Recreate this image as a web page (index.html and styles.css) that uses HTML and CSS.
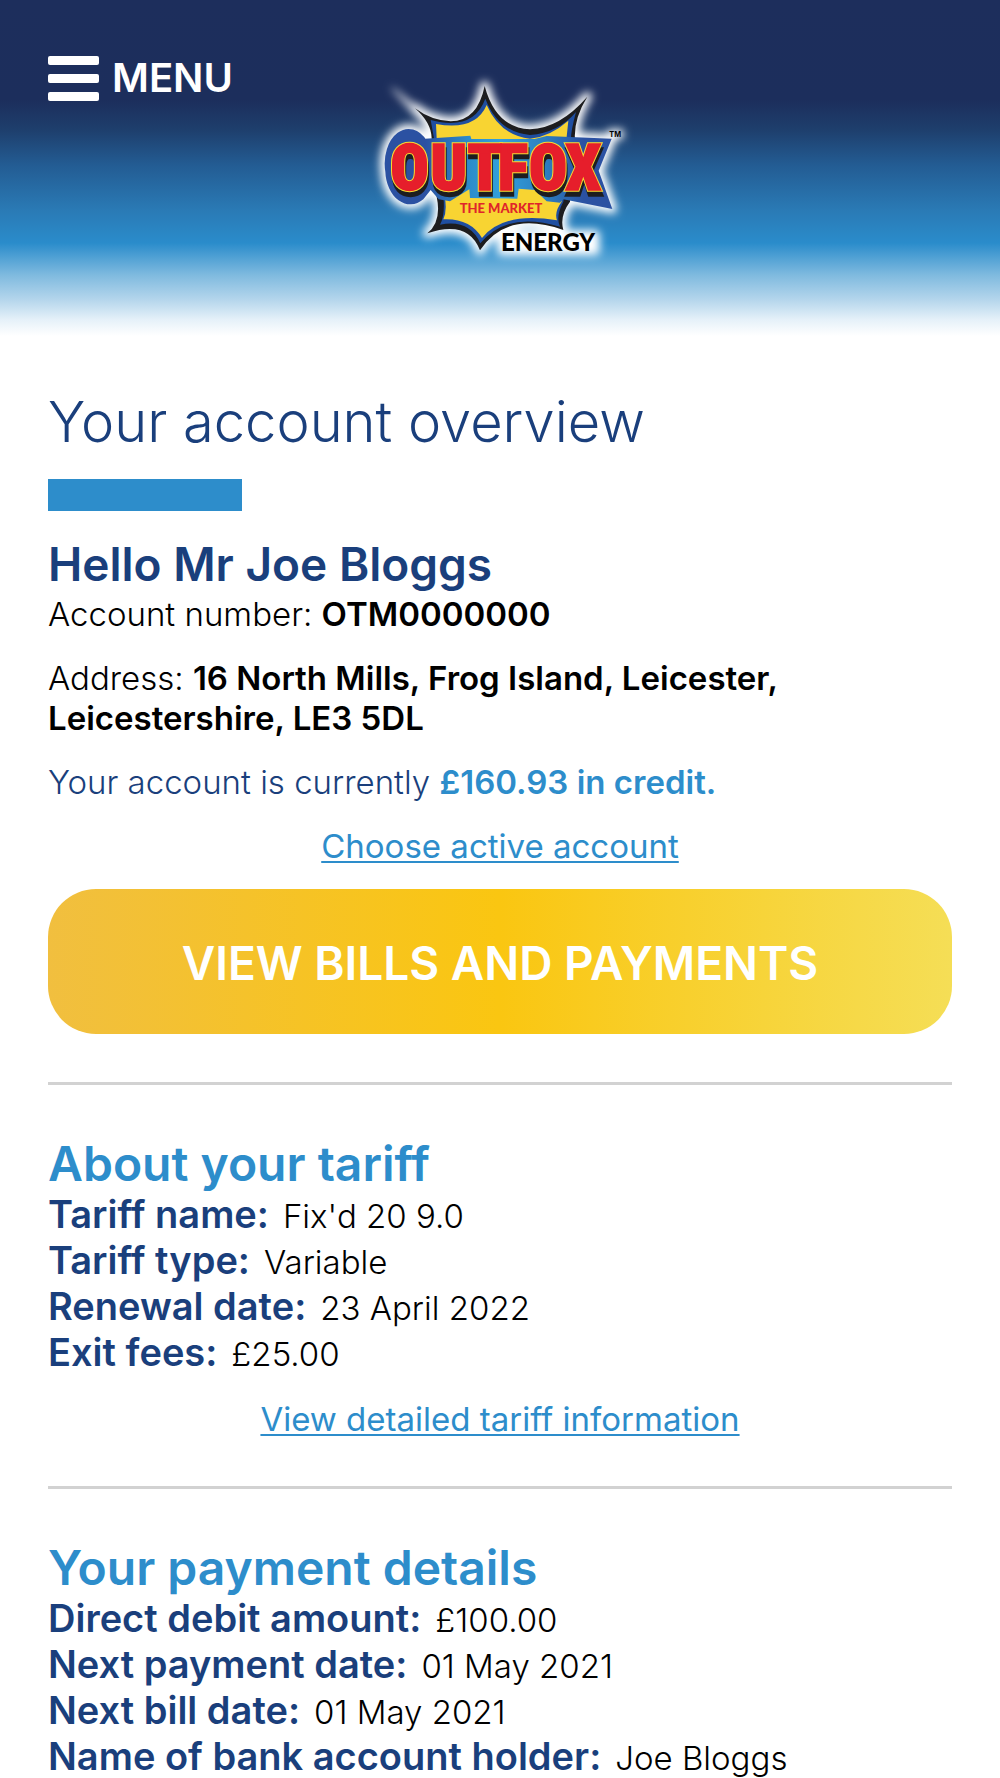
FILE: index.html
```html
<!DOCTYPE html>
<html lang="en">
<head>
  <meta charset="utf-8">
  <meta name="viewport" content="width=device-width, initial-scale=1">
  <title>Your account overview</title>
  <link rel="stylesheet" href="styles.css">
</head>
<body>
  <header class="header">
    <button class="menu" type="button">
      <svg class="menu-icon" viewBox="0 0 51 45" aria-hidden="true">
        <rect width="51" height="9" rx="2"/>
        <rect y="18" width="51" height="9" rx="2"/>
        <rect y="36" width="51" height="9" rx="2"/>
      </svg>
      MENU
    </button>
    <svg class="logo" viewBox="0 0 840 630" role="img" aria-label="Outfox the Market Energy">
      <defs>
        <filter id="glow" x="-20%" y="-20%" width="140%" height="140%">
          <feGaussianBlur stdDeviation="12"/>
        </filter>
        <linearGradient id="panel" gradientUnits="userSpaceOnUse" x1="90" y1="0" x2="750" y2="0">
          <stop offset="0" stop-color="#2b51a2"/>
          <stop offset=".16" stop-color="#2b51a2"/>
          <stop offset=".36" stop-color="#2c8ccb"/>
          <stop offset=".5" stop-color="#32a0dc"/>
          <stop offset=".7" stop-color="#2c80c0"/>
          <stop offset=".88" stop-color="#2b51a2"/>
        </linearGradient>
        <path id="burst" d="M165 145Q215 182 272 184Q352 184 374 78Q408 204 510 208Q600 204 682 110Q640 178 645 240L630 425Q598 468 610 510Q440 450 360 571Q324 478 202 520Q246 484 230 410L215 235Q214 188 165 145Z"/>
        <path id="plate" d="M195 236L331 227L334 237L524 237L560 228L755 236L716 332L757 447L610 418L600 428L560 424L524 390L476 386L472 416L330 414L328 388L270 424L236 418L212 390L190 418A75 102 0 0 1 76 335A72 104 0 0 1 200 242Z"/>
        <text id="word" y="389" x="91 211 322 413 506 616">OUTFOX</text>
      </defs>
      <g class="glow" filter="url(#glow)">
        <use href="#burst"/>
        <use href="#plate"/>
        <path class="flare" d="M96 84L172 145L205 205Z"/>
        <path d="M425 524H705V572H425Z"/>
        <path class="flare" d="M745 210H788V236H745Z"/>
      </g>
      <use class="burst-edge" href="#burst"/>
      <path class="burst-blue" d="M212 180Q340 214 376 116Q414 216 510 225Q596 218 648 156Q628 230 634 250L610 425Q586 470 600 500Q440 452 361 550Q328 476 240 494Q256 464 250 410L222 235Z"/>
      <path class="burst-fill" d="M228 192Q346 214 380 135Q420 226 510 236Q570 230 625 182L618 250L605 425Q582 456 591 481Q430 454 366 534Q330 474 250 478Q262 452 254 410L230 235Z"/>
      <use class="plate" href="#plate"/>
      <use class="word word-shadow" href="#word" x="3" y="15"/>
      <use class="word word-edge" href="#word"/>
      <use class="word word-fill" href="#word"/>
      <text class="tagline" x="299" y="459">THE MARKET</text>
      <text class="energy" x="423" y="572">ENERGY</text>
      <text class="mark" x="748" y="230">TM</text>
    </svg>
  </header>

  <main class="content">
    <h1 class="title">Your account overview</h1>
    <div class="accent"></div>

    <section class="account">
      <h2 class="greeting">Hello Mr Joe Bloggs</h2>
      <p class="line">Account number: <strong>OTM0000000</strong></p>
      <p class="line">Address: <strong>16 North Mills, Frog Island, Leicester, Leicestershire, LE3 5DL</strong></p>
      <p class="line balance">Your account is currently <strong class="credit">£160.93 in credit.</strong></p>
      <a class="link" href="#accounts">Choose active account</a>
      <button class="primary" type="button">VIEW BILLS AND PAYMENTS</button>
    </section>

    <section class="panel">
      <h2 class="heading">About your tariff</h2>
      <dl class="facts">
        <div class="fact"><dt>Tariff name:</dt><dd>Fix'd 20 9.0</dd></div>
        <div class="fact"><dt>Tariff type:</dt><dd>Variable</dd></div>
        <div class="fact"><dt>Renewal date:</dt><dd>23 April 2022</dd></div>
        <div class="fact"><dt>Exit fees:</dt><dd>£25.00</dd></div>
      </dl>
      <a class="link" href="#tariff">View detailed tariff information</a>
    </section>

    <section class="panel">
      <h2 class="heading">Your payment details</h2>
      <dl class="facts">
        <div class="fact"><dt>Direct debit amount:</dt><dd>£100.00</dd></div>
        <div class="fact"><dt>Next payment date:</dt><dd>01 May 2021</dd></div>
        <div class="fact"><dt>Next bill date:</dt><dd>01 May 2021</dd></div>
        <div class="fact"><dt>Name of bank account holder:</dt><dd>Joe Bloggs</dd></div>
      </dl>
    </section>
  </main>
</body>
</html>
```
FILE: styles.css
```css
* {
  box-sizing: border-box;
}

body {
  margin: 0;
  background: #fff;
  color: #000;
  font-family: Inter, "Noto Sans", sans-serif;
  font-size: 33px;
  line-height: 40px;
}

h1, h2, p, dl, dd {
  margin: 0;
}

.header {
  display: grid;
  grid-template-columns: 1fr auto 1fr;
  align-items: start;
  padding: 0 48px 70px;
  background: linear-gradient(#1d2e5c 0, #1c2e5c 100px, #1e3f6d 130px, #235c93 165px, #2a7ab5 210px, #2a8ccb 243px, #7fbadf 275px, #b5d6ec 300px, #e6f1f9 320px, #fff 336px);
}

.menu {
  display: flex;
  align-items: center;
  gap: 13px;
  justify-self: start;
  margin-top: 54px;
  padding: 0;
  border: 0;
  background: none;
  color: #fff;
  font: 600 40px/48px Inter, sans-serif;
}

.menu-icon {
  width: 51px;
  height: 45px;
  fill: #fff;
}

.logo {
  width: 280px;
  height: 210px;
  margin-top: 60px;
  overflow: visible;
}

.glow {
  fill: #fff;
  stroke: #fff;
  stroke-width: 28px;
  stroke-linejoin: round;
}

.flare {
  stroke-width: 4px;
}

.burst-edge { fill: #1d1d1f; }
.burst-blue { fill: #1f4ea0; }
.burst-fill { fill: #f8d432; }
.plate { fill: url(#panel); }

.word {
  font-family: "Roboto Condensed", Roboto, sans-serif;
  font-size: 192px;
  font-weight: 900;
}

.word-shadow {
  fill: #1d1d1f;
  stroke: #1d1d1f;
  stroke-width: 10px;
}

.word-edge {
  fill: #f6d932;
  stroke: #f6d932;
  stroke-width: 10px;
}

.word-fill {
  fill: #e61e2b;
  stroke: #e61e2b;
  stroke-width: 4px;
}

.tagline {
  fill: #e0242b;
  font: 900 39px Lato, sans-serif;
}

.energy {
  font: 900 72px Lato, sans-serif;
}

.mark {
  font: 700 22px Inter, sans-serif;
}

.content {
  padding: 48px 48px 0;
}

.title {
  color: #1a3f7c;
  font-size: 56px;
  font-weight: 300;
  line-height: 68px;
}

.accent {
  width: 194px;
  height: 32px;
  margin: 23px 0 29px;
  background: #2d8dcb;
}

.account {
  padding-bottom: 48px;
}

.greeting,
.heading {
  font-size: 46px;
  font-weight: 600;
  line-height: 48px;
}

.greeting {
  margin-bottom: 6px;
  color: #1a3f7c;
}

.heading {
  margin-bottom: 3px;
  color: #2d8dcb;
  font-size: 48px;
}

.line {
  margin-bottom: 24px;
  font-weight: 300;
}

.line strong {
  font-weight: 600;
}

.balance {
  color: #1a3f7c;
}

.line .credit {
  color: #2d8dcb;
}

.link {
  display: block;
  color: #2d8dcb;
  text-align: center;
  text-decoration-thickness: 2px;
  text-underline-offset: 3px;
}

.primary {
  width: 100%;
  height: 145px;
  margin-top: 23px;
  padding: 2px 0 0;
  border: 0;
  border-radius: 48px;
  background: linear-gradient(90deg, #f1bf3f, #fac611 50%, #f5de56);
  color: #fff;
  font: 600 46px/52px Inter, sans-serif;
}

.panel {
  padding: 55px 0 47px;
  border-top: 3px solid #d2d2d2;
}

.facts {
  margin-bottom: 24px;
}

.fact {
  display: flex;
  align-items: baseline;
  gap: 14px;
}

.fact dt {
  color: #1a3f7c;
  font-size: 38px;
  font-weight: 600;
  line-height: 46px;
}

.fact dd {
  font-weight: 300;
}
```
